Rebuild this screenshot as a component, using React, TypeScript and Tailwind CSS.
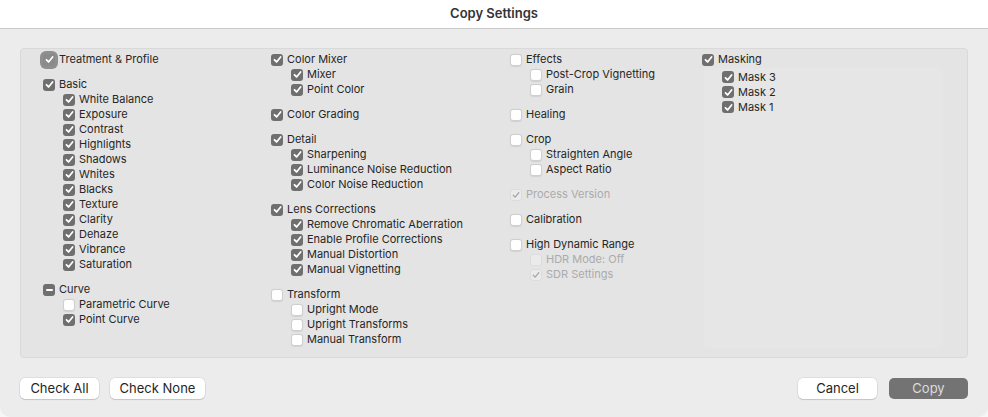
import React from 'react';

type Item = {
  label: string;
  checked?: boolean;
  mixed?: boolean;
  disabled?: boolean;
  focus?: boolean;
  children?: Item[];
};

// Column data, top to bottom
const col1: Item[] = [
  { label: 'Treatment & Profile', checked: true, focus: true },
  {
    label: 'Basic',
    checked: true,
    children: [
      'White Balance', 'Exposure', 'Contrast', 'Highlights', 'Shadows', 'Whites',
      'Blacks', 'Texture', 'Clarity', 'Dehaze', 'Vibrance', 'Saturation',
    ].map((label) => ({ label, checked: true })),
  },
  {
    label: 'Curve',
    mixed: true,
    children: [
      { label: 'Parametric Curve' },
      { label: 'Point Curve', checked: true },
    ],
  },
];

const col2: Item[] = [
  {
    label: 'Color Mixer',
    checked: true,
    children: [
      { label: 'Mixer', checked: true },
      { label: 'Point Color', checked: true },
    ],
  },
  { label: 'Color Grading', checked: true },
  {
    label: 'Detail',
    checked: true,
    children: [
      { label: 'Sharpening', checked: true },
      { label: 'Luminance Noise Reduction', checked: true },
      { label: 'Color Noise Reduction', checked: true },
    ],
  },
  {
    label: 'Lens Corrections',
    checked: true,
    children: [
      { label: 'Remove Chromatic Aberration', checked: true },
      { label: 'Enable Profile Corrections', checked: true },
      { label: 'Manual Distortion', checked: true },
      { label: 'Manual Vignetting', checked: true },
    ],
  },
  {
    label: 'Transform',
    children: [
      { label: 'Upright Mode' },
      { label: 'Upright Transforms' },
      { label: 'Manual Transform' },
    ],
  },
];

const col3: Item[] = [
  {
    label: 'Effects',
    children: [{ label: 'Post-Crop Vignetting' }, { label: 'Grain' }],
  },
  { label: 'Healing' },
  {
    label: 'Crop',
    children: [{ label: 'Straighten Angle' }, { label: 'Aspect Ratio' }],
  },
  { label: 'Process Version', checked: true, disabled: true },
  { label: 'Calibration' },
  {
    label: 'High Dynamic Range',
    children: [
      { label: 'HDR Mode: Off', disabled: true },
      { label: 'SDR Settings', checked: true, disabled: true },
    ],
  },
];

const masks: Item[] = [
  { label: 'Mask 3', checked: true },
  { label: 'Mask 2', checked: true },
  { label: 'Mask 1', checked: true },
];

const Box: React.FC<{ item: Item }> = ({ item }) => {
  const { checked, mixed, disabled, focus } = item;
  if (disabled) {
    return (
      <span className="w-[12px] h-[12px] rounded-[3px] bg-[#ebebeb] border border-[#dcdcdc] flex items-center justify-center shrink-0">
        {checked && (
          <svg width="10" height="10" viewBox="0 0 12 12">
            <path d="M2.8 6.3 L5 8.6 L9.3 3.3" fill="none" stroke="#a9a9a9" strokeWidth="1.6" strokeLinecap="round" strokeLinejoin="round" />
          </svg>
        )}
      </span>
    );
  }
  if (checked || mixed) {
    return (
      <span
        className={`w-[12px] h-[12px] rounded-[3px] flex items-center justify-center shrink-0 ${
          focus ? 'bg-[#8a8a8a] shadow-[0_0_0_3px_#8f8f8f]' : 'bg-[#6f6f6f]'
        }`}
      >
        {mixed ? (
          <span className="w-[7px] h-[2px] rounded-[1px] bg-white" />
        ) : (
          <svg width="11" height="11" viewBox="0 0 12 12">
            <path d="M2.7 6.3 L5 8.7 L9.4 3.2" fill="none" stroke="white" strokeWidth="1.9" strokeLinecap="round" strokeLinejoin="round" />
          </svg>
        )}
      </span>
    );
  }
  return (
    <span className="w-[12px] h-[12px] rounded-[3px] bg-white border border-[#cfcfcf] shadow-[0_0.5px_1px_rgba(0,0,0,0.08)] shrink-0" />
  );
};

const Row: React.FC<{ item: Item }> = ({ item }) => (
  <div className="h-[15px] flex items-center gap-[4px]">
    <Box item={item} />
    <span className={`leading-none ${item.disabled ? 'text-[#ababab]' : 'text-[#262626]'}`}>
      {item.label}
    </span>
  </div>
);

const Group: React.FC<{ item: Item }> = ({ item }) => (
  <div className="flex flex-col">
    <Row item={item} />
    {item.children && (
      <div className="flex flex-col pl-[20px]">
        {item.children.map((c) => (
          <Row key={c.label} item={c} />
        ))}
      </div>
    )}
  </div>
);

const Column: React.FC<{ items: Item[]; className: string }> = ({ items, className }) => (
  <div className={`flex flex-col gap-[10px] ${className}`}>
    {items.map((it) => (
      <Group key={it.label} item={it} />
    ))}
  </div>
);

const Button: React.FC<{ label: string; className: string; primary?: boolean }> = ({ label, className, primary }) => (
  <button
    className={`h-[21px] rounded-[5px] text-[13px] leading-none flex items-center justify-center ${
      primary
        ? 'bg-[#737373] text-[#dcdcdc]'
        : 'bg-white text-[#262626] shadow-[0_0_0_0.5px_rgba(0,0,0,0.12),0_1px_1px_rgba(0,0,0,0.12)]'
    } ${className}`}
  >
    {label}
  </button>
);

export default function App() {
  return (
    <div
      className="w-[988px] h-[417px] bg-[#f6f6f6] overflow-hidden"
      style={{ fontFamily: 'Inter, "Liberation Sans", sans-serif' }}
    >
      <div className="w-full h-full bg-[#ececec] rounded-b-[10px] flex flex-col">
        {/* Title bar */}
        <div className="h-[29px] shrink-0 bg-white border-b border-[#c9c9c9] flex items-center justify-center">
          <span className="text-[13px] font-semibold text-[#333333]">Copy Settings</span>
        </div>

        {/* Settings panel */}
        <div className="mt-[19px] mx-[20px] h-[310px] border border-[#d9d9d9] rounded-[4px] bg-[#e4e4e4] flex pt-[3px] pl-[22px] text-[11px]">
          <Column items={col1} className="w-[228px]" />
          <Column items={col2} className="w-[239px]" />
          <Column items={col3} className="w-[192px]" />
          <div className="flex-1 flex flex-col">
            <Row item={{ label: 'Masking', checked: true }} />
            <div className="flex-1 mt-[1px] ml-[2px] mr-[24px] mb-[9px] bg-[#e6e6e6] rounded-[4px] pl-[18px] pt-[1.5px] flex flex-col">
              {masks.map((m) => (
                <Row key={m.label} item={m} />
              ))}
            </div>
          </div>
        </div>

        {/* Footer buttons */}
        <div className="mt-[20px] mx-[20px] flex items-center">
          <Button label="Check All" className="w-[79px]" />
          <Button label="Check None" className="w-[95px] ml-[11px]" />
          <div className="flex-1" />
          <Button label="Cancel" className="w-[79px]" />
          <Button label="Copy" className="w-[79px] ml-[12px]" primary />
        </div>
      </div>
    </div>
  );
}
